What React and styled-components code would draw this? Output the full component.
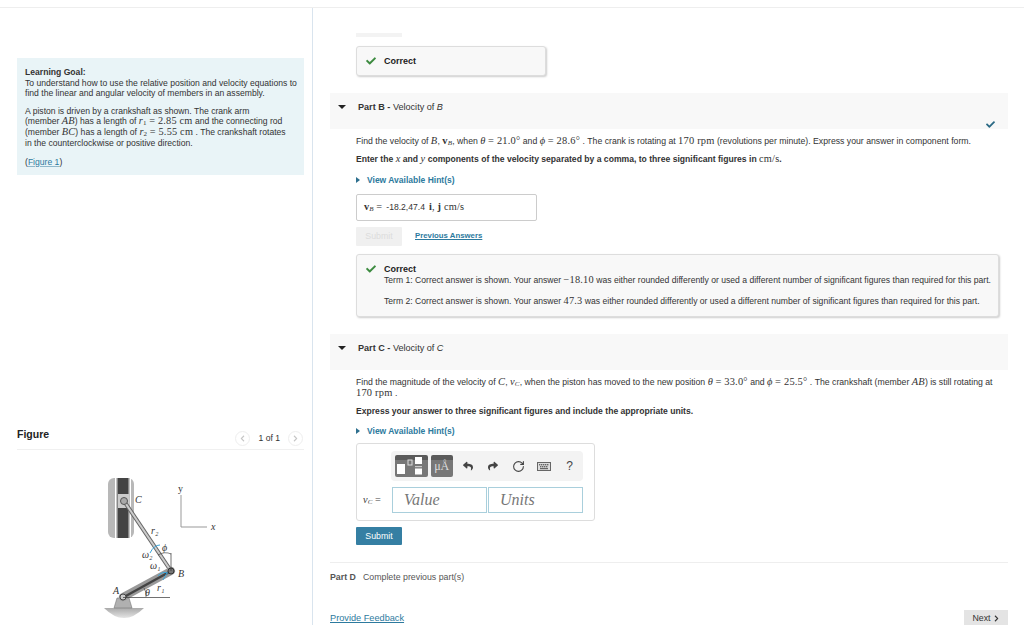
import React from 'react';
import styled, { createGlobalStyle } from 'styled-components';
import { FaCheck, FaReply, FaShare, FaChevronRight, FaChevronLeft } from 'react-icons/fa';
import { RotateCw } from 'lucide-react';

const Global = createGlobalStyle`
  html, body { margin: 0; padding: 0; background: #fff; }
  body { font-family: "Liberation Sans", Arial, sans-serif; color: #333; overflow: hidden; }
`;

const Page = styled.div`
  width: 1024px;
  height: 625px;
  margin-top: 7px;
  border-top: 1px solid #eee;
  box-sizing: border-box;
  display: flex;
  overflow: hidden;
  position: relative;
`;

const LeftPane = styled.div`
  width: 313px;
  height: 618px;
  box-sizing: border-box;
  border-right: 1px solid #d9e4ee;
  padding: 50px 8px 0 17px;
  flex-shrink: 0;
  overflow: hidden;
`;

const GoalBox = styled.div`
  height: 117px;
  box-sizing: border-box;
  background: #e9f4f7;
  padding: 9px 0 0 8px;
  font-size: 8.6px;
  line-height: 10.5px;
  white-space: nowrap;
`;

const GoalPara = styled.p`
  margin: 0 0 ${p => p.$mb || 7}px;
  line-height: ${p => p.$lh || 10.5}px;
`;

const FigureLink = styled.a`
  color: #2d7a9e;
  text-decoration: underline;
  text-decoration-color: #8fb8cb;
`;

const Mi = styled.span`
  font-family: "Liberation Serif", serif;
  font-style: ${p => (p.$plain ? 'normal' : 'italic')};
  font-weight: ${p => (p.$bold ? 700 : 400)};
  font-size: 1.2em;
  line-height: 1;
  letter-spacing: 0.2px;
  sub {
    font-size: 0.68em;
    line-height: 0;
    vertical-align: -0.15em;
    font-style: ${p => (p.$upsub ? 'normal' : 'italic')};
    font-weight: 400;
  }
`;

const FigureHeader = styled.div`
  margin-top: 250px;
  height: 25px;
  box-sizing: border-box;
  border-bottom: 1px solid #f0f0f0;
  display: flex;
  align-items: flex-start;
  justify-content: space-between;
`;

const FigureTitle = styled.div`
  font-size: 10.5px;
  font-weight: 700;
  color: #222;
  line-height: 18px;
`;

const Pager = styled.div`
  display: flex;
  align-items: center;
  gap: 8px;
  font-size: 8.6px;
  margin: 5px 1px 0 0;
  height: 16px;
`;

const PagerBtn = styled.span`
  width: 15px;
  height: 15px;
  border-radius: 50%;
  border: 1px solid #eee;
  box-sizing: border-box;
  color: #c5c5c5;
  font-size: 7px;
  display: flex;
  align-items: center;
  justify-content: center;
`;

const FigureWrap = styled.div`
  display: flex;
  margin: 28px 0 0 73px;
`;

const RightPane = styled.div`
  flex: 1;
  height: 618px;
  box-sizing: border-box;
  padding: 25px 16px 0 17px;
  font-size: 8.6px;
  line-height: 10.5px;
  position: relative;
`;

const Stub = styled.div`
  width: 46px;
  height: 4px;
  margin-left: 26px;
  background: #f3f3f3;
`;

const Indent = styled.div`
  margin-left: 26px;
`;

const Feedback = styled.div`
  width: ${p => p.$w};
  box-sizing: border-box;
  margin: ${p => p.$m};
  min-height: ${p => p.$h};
  border: 1px solid #ddd;
  border-radius: 3px;
  background: #f8f8f8;
  box-shadow: 1px 1px 2px rgba(0,0,0,.2);
  display: flex;
  gap: 8px;
  padding: ${p => p.$pad};
`;

const GreenCheck = styled(FaCheck)`
  color: #3d8b40;
  font-size: 10px;
  flex-shrink: 0;
`;

const FeedbackTitle = styled.div`
  font-weight: 700;
  font-size: 9px;
  color: #222;
  line-height: 10px;
`;

const Term = styled.div`
  margin-top: ${p => p.$mt}px;
  font-size: 8.6px;
  line-height: 11px;
  white-space: nowrap;
`;

const PartHeader = styled.div`
  height: 36px;
  margin-top: ${p => p.$mt}px;
  background: #f8f8f8;
  display: flex;
  padding: 9px 0 0 8px;
  box-sizing: border-box;
  position: relative;
  font-size: 9.1px;
  color: #333;
`;

const DownTri = styled.span`
  width: 0;
  height: 0;
  border-left: 4px solid transparent;
  border-right: 4px solid transparent;
  border-top: 4px solid #222;
  margin: 3px 12px 0 0;
`;

const PartCheck = styled(FaCheck)`
  position: absolute;
  right: 13px;
  bottom: 0;
  color: #2b6a85;
  font-size: 9px;
`;

const Body = styled.p`
  margin: ${p => p.$m};
  font-size: ${p => (p.$bold ? 8.6 : 8.7)}px;
  line-height: 11px;
  color: #333;
  font-weight: ${p => (p.$bold ? 700 : 400)};
  white-space: nowrap;
`;

const Hint = styled.div`
  margin: ${p => p.$m};
  display: flex;
  align-items: center;
  gap: 7px;
  color: #2d7a9e;
  font-weight: 700;
  font-size: 8.5px;
  line-height: 10px;
`;

const RightTri = styled.span`
  width: 0;
  height: 0;
  border-top: 3.5px solid transparent;
  border-bottom: 3.5px solid transparent;
  border-left: 4px solid #2d6f8e;
`;

const AnswerBox = styled.div`
  width: 181px;
  height: 27px;
  box-sizing: border-box;
  margin-top: 9px;
  border: 1px solid #ccc;
  border-radius: 2px;
  display: flex;
  align-items: center;
  gap: 4px;
  padding-left: 7px;
  font-size: 8.6px;
  white-space: nowrap;
`;

const SubmitRow = styled.div`
  display: flex;
  align-items: center;
  gap: 13px;
  margin-top: ${p => p.$mt}px;
`;

const SubmitBtn = styled.div`
  width: 46px;
  height: ${p => (p.$off ? 19 : 18)}px;
  border-radius: 1px;
  background: ${p => (p.$off ? '#f0f0f0' : '#357fa3')};
  color: ${p => (p.$off ? '#dcdcdc' : '#fff')};
  font-size: 8.8px;
  display: flex;
  align-items: center;
  justify-content: center;
`;

const PrevLink = styled.a`
  color: #2d7a9e;
  font-weight: 700;
  font-size: 7.8px;
  text-decoration: underline;
`;

const Editor = styled.div`
  width: 239px;
  height: 78px;
  box-sizing: border-box;
  margin-top: 7px;
  border: 1px solid #ddd;
  border-radius: 3px;
  padding: 7px 11px 0 34px;
`;

const Toolbar = styled.div`
  height: 30px;
  background: #f3f3f3;
  border-radius: 4px;
  display: flex;
  align-items: center;
  padding-left: 4px;
`;

const TemplateBtn = styled.div`
  width: ${p => p.$w}px;
  height: 22px;
  margin-right: 3px;
  border-radius: 2px;
  background: linear-gradient(#5a5a5a 0 5px, #777 5px);
  display: flex;
  align-items: center;
  justify-content: center;
  color: #ddd;
  font-family: "Liberation Serif", serif;
  font-size: 12px;
`;

const ToolIcon = styled.span`
  width: ${p => p.$w}px;
  display: flex;
  justify-content: center;
  color: #444;
  font-size: ${p => p.$size || 10}px;
`;

const InputRow = styled.div`
  display: flex;
  align-items: center;
  gap: 1px;
  margin: 6px 0 0 -28px;
  position: relative;
`;

const InputLabel = styled.span`
  width: 28px;
  font-size: 8.6px;
  color: #444;
  white-space: nowrap;
`;

const MathInput = styled.div`
  width: ${p => p.$w}px;
  height: 26px;
  box-sizing: border-box;
  border: 1px solid #a9cfdc;
  padding-left: 11px;
  font-family: "Liberation Serif", serif;
  font-style: italic;
  font-size: 16px;
  line-height: 24px;
  color: #777;
`;

const Divider = styled.div`
  margin-top: 17px;
  border-top: 1px solid #eee;
`;

const PartD = styled.div`
  margin-top: 9px;
  display: flex;
  gap: 7px;
  font-size: 8.8px;
  color: #555;
`;

const FooterRow = styled.div`
  display: flex;
  justify-content: space-between;
  align-items: flex-end;
  position: absolute;
  left: 17px;
  right: 16px;
  bottom: 0;
`;

const FeedbackLink = styled.a`
  color: #2d7a9e;
  font-size: 9.2px;
  text-decoration: underline;
  line-height: 13px;
  margin-bottom: 1px;
`;

const NextBtn = styled.div`
  width: 44px;
  height: 16px;
  background: #e4e4e4;
  display: flex;
  align-items: center;
  justify-content: center;
  gap: 2px;
  font-size: 8.8px;
  color: #333;
`;

const KeyboardIcon = () => (
  <svg width="14" height="9" viewBox="0 0 14 9">
    <rect x="0.5" y="0.5" width="13" height="8" fill="#ddd" stroke="#666" />
    {[2, 4, 6, 8, 10].map(x => <rect key={x} x={x} y="2" width="1.4" height="1.4" fill="#666" />)}
    {[3, 5, 7, 9].map(x => <rect key={x} x={x} y="4" width="1.4" height="1.4" fill="#666" />)}
    <rect x="3" y="6" width="8" height="1.2" fill="#666" />
  </svg>
);

const TemplateIcon = () => (
  <svg width="30" height="20" viewBox="0 0 30 20">
    <rect x="1" y="8" width="8" height="10" fill="#fff" />
    <rect x="12" y="4" width="4" height="5" fill="none" stroke="#ddd" />
    <rect x="19" y="1" width="7" height="7" fill="#fff" />
    <rect x="19" y="10" width="7" height="1.2" fill="#ccc" />
    <rect x="19" y="12.5" width="7" height="6" fill="#fff" />
  </svg>
);

const CrankFigure = () => (
  <svg width="140" height="147" viewBox="0 8 140 147">
    <defs>
      <linearGradient id="ground" x1="0" y1="0" x2="0" y2="1">
        <stop offset="0" stopColor="#aaa" />
        <stop offset="1" stopColor="#e4e4e4" />
      </linearGradient>
    </defs>
    <rect x="18" y="8" width="26" height="60" rx="6" fill="#b8b8b8" />
    <rect x="25" y="8" width="16" height="60" fill="#fff" />
    <rect x="26.5" y="8" width="13" height="60" fill="#888" />
    <rect x="28" y="8" width="10" height="60" fill="#444" />
    <rect x="28" y="24" width="11" height="14" fill="#ccc" />
    <line x1="34" y1="31" x2="81" y2="101" stroke="#666" strokeWidth="4" />
    <line x1="34" y1="31" x2="81" y2="101" stroke="#ccc" strokeWidth="2" />
    <circle cx="34" cy="31" r="3.5" fill="#aaa" stroke="#555" />
    <path d="M14 138 H54 Q34 158 14 138Z" fill="url(#ground)" />
    <path d="M24 138 L27 128 H39 L42 138Z" fill="#b0b0b0" stroke="#777" strokeWidth=".6" />
    <line x1="33" y1="127" x2="81" y2="101" stroke="#999" strokeWidth="8" strokeLinecap="round" />
    <line x1="34" y1="127" x2="81" y2="101" stroke="#444" strokeWidth="2.5" />
    <circle cx="33" cy="127" r="3" fill="#ccc" stroke="#444" />
    <circle cx="81" cy="101" r="3" fill="#777" stroke="#333" />
    <line x1="33" y1="127.5" x2="80" y2="127.5" stroke="#333" strokeWidth=".7" />
    <line x1="81" y1="101" x2="81" y2="83" stroke="#333" strokeWidth=".7" />
    <path d="M68 85 Q75 81 81 84" fill="none" stroke="#333" strokeWidth=".6" />
    <path d="M54 118 Q57 123 56 127" fill="none" stroke="#333" strokeWidth=".6" />
    <path d="M60 83 Q64 75 70 75" fill="none" stroke="#3aa6dc" strokeWidth="1" />
    <path d="M68 106 Q72 101 78 103 M77 103 L73 110" fill="none" stroke="#3aa6dc" strokeWidth="1" />
    <path d="M91 25 V57 H117" fill="none" stroke="#999" strokeWidth="1" />
    <g fontFamily="Liberation Serif, serif" fontStyle="italic" fontSize="10" fill="#333">
      <text x="45" y="33">C</text>
      <text x="88" y="22" fontStyle="normal">y</text>
      <text x="121" y="60">x</text>
      <text x="61" y="64">r₂</text>
      <text x="52" y="88">ω₂</text>
      <text x="60" y="99">ω₁</text>
      <text x="88" y="107">B</text>
      <text x="67" y="121">r₁</text>
      <text x="23" y="124">A</text>
      <text x="55" y="126">θ</text>
      <text x="72" y="81">ϕ</text>
    </g>
  </svg>
);

export default function App() {
  return (
    <>
      <Global />
      <Page>
        <LeftPane>
          <GoalBox>
            <GoalPara>
              <b>Learning Goal:</b><br />
              To understand how to use the relative position and velocity equations to<br />
              find the linear and angular velocity of members in an assembly.
            </GoalPara>
            <GoalPara $mb={8} $lh={10.8}>
              A piston is driven by a crankshaft as shown. The crank arm<br />
              (member <Mi>AB</Mi>) has a length of <Mi $upsub>r<sub>1</sub></Mi> <Mi $plain>= 2.85 cm</Mi> and the connecting rod<br />
              (member <Mi>BC</Mi>) has a length of <Mi $upsub>r<sub>2</sub></Mi> <Mi $plain>= 5.55 cm</Mi> . The crankshaft rotates<br />
              in the counterclockwise or positive direction.
            </GoalPara>
            <GoalPara>(<FigureLink>Figure 1</FigureLink>)</GoalPara>
          </GoalBox>
          <FigureHeader>
            <FigureTitle>Figure</FigureTitle>
            <Pager>
              <PagerBtn><FaChevronLeft /></PagerBtn>
              <span>1 of 1</span>
              <PagerBtn><FaChevronRight /></PagerBtn>
            </Pager>
          </FigureHeader>
          <FigureWrap>
            <CrankFigure />
          </FigureWrap>
        </LeftPane>
        <RightPane>
          <Stub />
          <Feedback $w="190px" $h="30px" $m="9px 0 0 26px" $pad="9px 9px">
            <GreenCheck />
            <FeedbackTitle>Correct</FeedbackTitle>
          </Feedback>
          <PartHeader $mt={17}>
            <DownTri />
            <span><b>Part B - </b>Velocity of <i>B</i></span>
            <PartCheck />
          </PartHeader>
          <Indent>
            <Body $m="7px 0 0">
              Find the velocity of <Mi>B</Mi>, <Mi $plain $bold>v<sub>B</sub></Mi>, when <Mi>θ</Mi> <Mi $plain>= 21.0°</Mi> and <Mi>ϕ</Mi> <Mi $plain>= 28.6°</Mi> . The crank is rotating at <Mi $plain>170 rpm</Mi> (revolutions per minute). Express your answer in component form.
            </Body>
            <Body $bold $m="7px 0 0">
              Enter the <Mi>x</Mi> and <Mi>y</Mi> components of the velocity separated by a comma, to three significant figures in <Mi $plain>cm/s</Mi>.
            </Body>
            <Hint $m="10px 0 0"><RightTri />View Available Hint(s)</Hint>
            <AnswerBox>
              <span><Mi $plain $bold>v<sub>B</sub></Mi> <Mi $plain>=</Mi></span>
              <span>-18.2,47.4</span>
              <Mi $plain><b>i</b>, <b>j</b> cm/s</Mi>
            </AnswerBox>
            <SubmitRow $mt={6}>
              <SubmitBtn $off>Submit</SubmitBtn>
              <PrevLink>Previous Answers</PrevLink>
            </SubmitRow>
            <Feedback $w="643px" $h="62px" $m="8px 0 0" $pad="9px 9px">
              <GreenCheck />
              <div>
                <FeedbackTitle>Correct</FeedbackTitle>
                <Term $mt={1}>Term 1: Correct answer is shown. Your answer <Mi $plain>−18.10</Mi> was either rounded differently or used a different number of significant figures than required for this part.</Term>
                <Term $mt={10}>Term 2: Correct answer is shown. Your answer <Mi $plain>47.3</Mi> was either rounded differently or used a different number of significant figures than required for this part.</Term>
              </div>
            </Feedback>
          </Indent>
          <PartHeader $mt={17}>
            <DownTri />
            <span><b>Part C - </b>Velocity of <i>C</i></span>
          </PartHeader>
          <Indent>
            <Body $m="7px 0 0">
              Find the magnitude of the velocity of <Mi>C</Mi>, <Mi>v<sub>C</sub></Mi>, when the piston has moved to the new position <Mi>θ</Mi> <Mi $plain>= 33.0°</Mi> and <Mi>ϕ</Mi> <Mi $plain>= 25.5°</Mi> . The crankshaft (member <Mi>AB</Mi>) is still rotating at<br />
              <Mi $plain>170 rpm</Mi> .
            </Body>
            <Body $bold $m="7px 0 0">Express your answer to three significant figures and include the appropriate units.</Body>
            <Hint $m="9px 0 0"><RightTri />View Available Hint(s)</Hint>
            <Editor>
              <Toolbar>
                <TemplateBtn $w={33}><TemplateIcon /></TemplateBtn>
                <TemplateBtn $w={22}>μÅ</TemplateBtn>
                <ToolIcon $w={25}><FaReply /></ToolIcon>
                <ToolIcon $w={26}><FaShare /></ToolIcon>
                <ToolIcon $w={25}><RotateCw size={13} strokeWidth={2} /></ToolIcon>
                <ToolIcon $w={25}><KeyboardIcon /></ToolIcon>
                <ToolIcon $w={27} $size={12}>?</ToolIcon>
              </Toolbar>
              <InputRow>
                <InputLabel><Mi>v<sub>C</sub></Mi> <Mi $plain>=</Mi></InputLabel>
                <MathInput $w={95}>Value</MathInput>
                <MathInput $w={95}>Units</MathInput>
              </InputRow>
            </Editor>
            <SubmitRow $mt={6}>
              <SubmitBtn>Submit</SubmitBtn>
            </SubmitRow>
          </Indent>
          <Divider />
          <PartD><b>Part D</b><span>Complete previous part(s)</span></PartD>
          <FooterRow>
            <FeedbackLink>Provide Feedback</FeedbackLink>
            <NextBtn>Next <FaChevronRight size={7} /></NextBtn>
          </FooterRow>
        </RightPane>
      </Page>
    </>
  );
}
